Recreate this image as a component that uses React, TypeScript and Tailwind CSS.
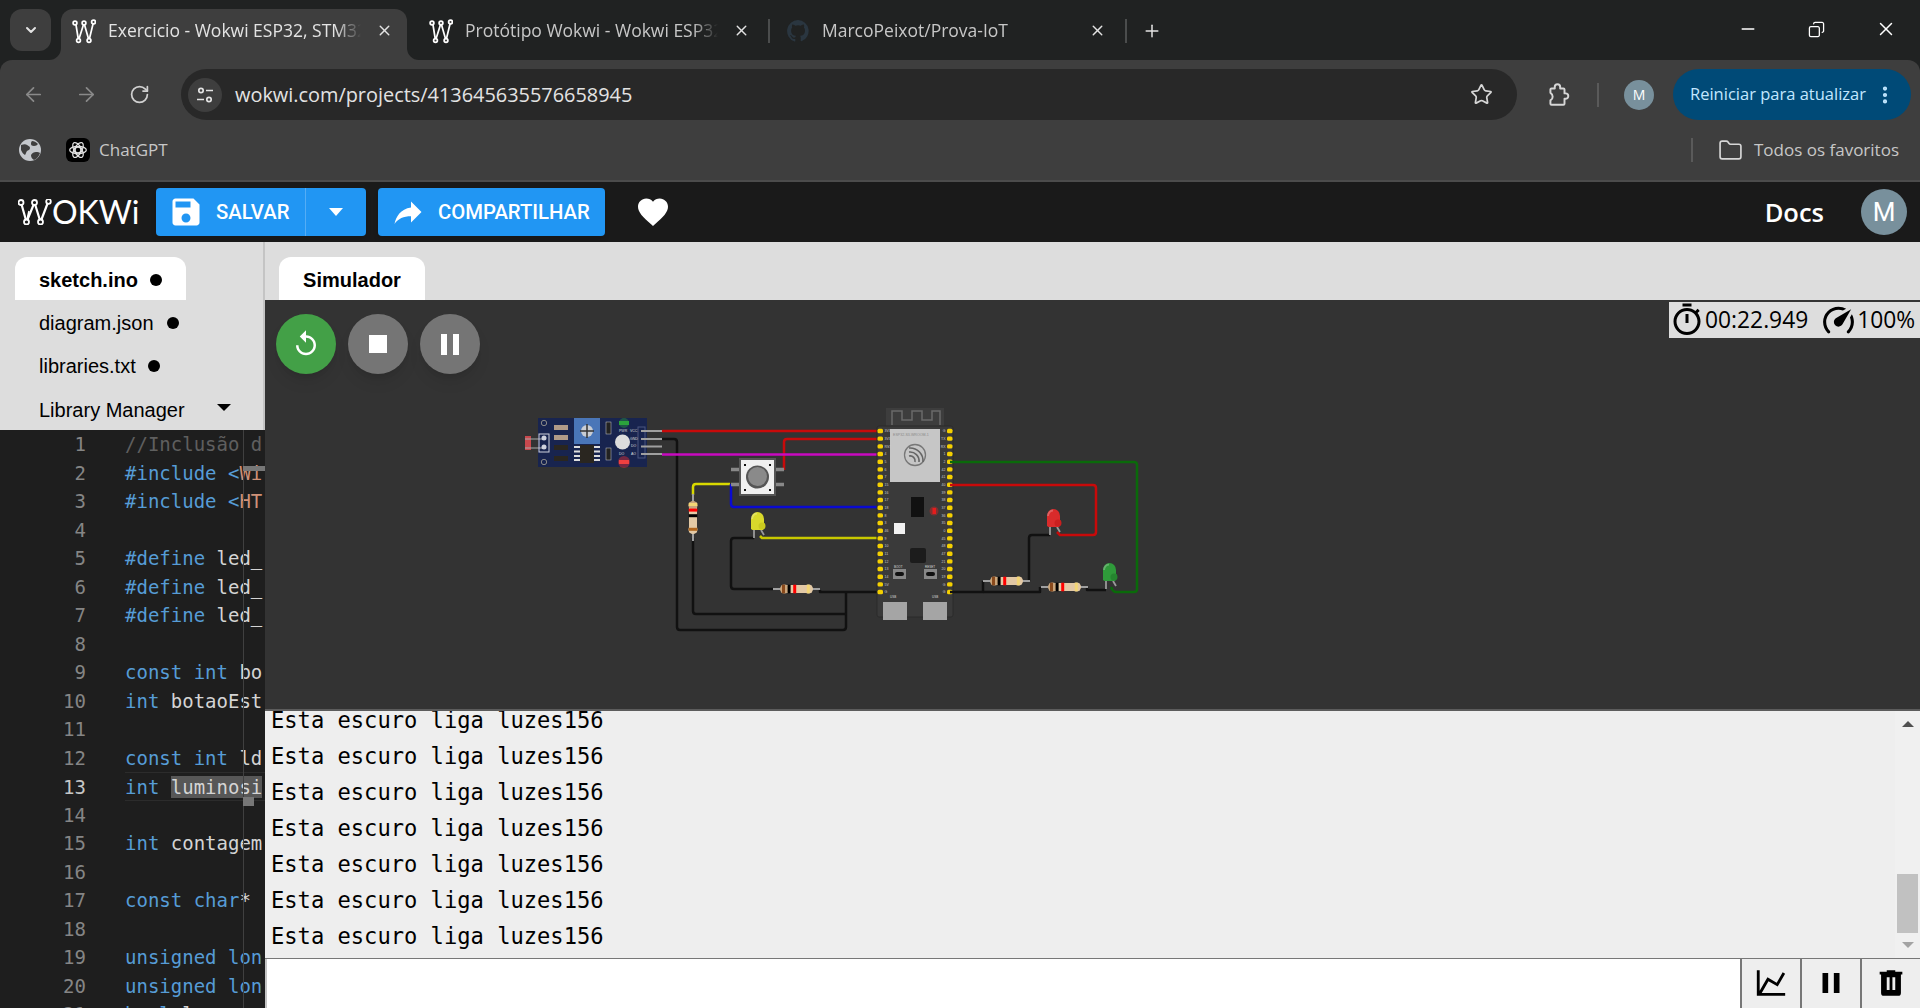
import React from "react";
import { ArrowLeft, ArrowRight, RotateCw, Star, Folder, X, Plus, Minus, ChevronDown, EllipsisVertical, Copy } from "lucide-react";

const ui = "font-['Open_Sans','Noto_Sans',sans-serif]";

function WMark({ className, big }: { className?: string; big?: boolean }) {
  if (big) {
    return (
      <svg viewBox="0 0 34 26" className={className} fill="none" stroke="#fff" strokeWidth="2.200">
        <path d="M3 3.500L8.500 23L16.500 3.500L22.500 23L30.500 2" strokeLinejoin="round" />
        <path d="M8.500 23L11 12" strokeWidth="1.600" />
        <circle cx="3" cy="3.500" r="2.500" fill="#1a1a1a" strokeWidth="1.800" />
        <circle cx="16.500" cy="3.500" r="2.500" fill="#1a1a1a" strokeWidth="1.800" />
        <circle cx="30.500" cy="2.500" r="2.300" fill="#1a1a1a" strokeWidth="1.800" />
        <circle cx="8.500" cy="23" r="2.500" fill="#1a1a1a" strokeWidth="1.800" />
        <circle cx="22.500" cy="23" r="2.500" fill="#1a1a1a" strokeWidth="1.800" />
      </svg>
    );
  }
  return (
    <svg viewBox="0 0 24 26" className={className} fill="none" stroke="#fff" strokeWidth="1.700">
      <path d="M3.700 5L6.500 22.500L12 5L17 22.500L21.500 4" strokeLinejoin="round" />
      <circle cx="3" cy="5" r="1.900" fill="#3e3e3e" />
      <circle cx="12" cy="5" r="1.900" fill="#3e3e3e" />
      <circle cx="21.500" cy="4" r="1.900" fill="#3e3e3e" />
      <circle cx="6.500" cy="22.500" r="1.900" fill="#3e3e3e" />
      <circle cx="17" cy="22.500" r="1.900" fill="#3e3e3e" />
    </svg>
  );
}

function BrowserTab({ title, active, github, width }: { title: string; active?: boolean; github?: boolean; width: string }) {
  return (
    <div className={`relative ${width} h-[51px] flex items-center shrink-0 pl-[11px] pr-[14px] pb-[8px] rounded-t-[12px] ${active ? "bg-[#3e3e3e]" : ""}`}>
      {active && (
        <>
          <svg viewBox="0 0 12 12" className="absolute -left-[12px] bottom-0 w-[12px] h-[12px]"><path d="M12 0V12H0A12 12 0 0 0 12 0z" fill="#3e3e3e" /></svg>
          <svg viewBox="0 0 12 12" className="absolute -right-[12px] bottom-0 w-[12px] h-[12px]"><path d="M0 0V12H12A12 12 0 0 1 0 0z" fill="#3e3e3e" /></svg>
        </>
      )}
      {github ? (
        <svg viewBox="0 0 24 24" className="w-[24px] h-[24px] shrink-0 mr-[12px]" fill="#2a3640">
          <path d="M12 1a11 11 0 0 0-3.500 21.400c.6.1.8-.2.8-.5v-2c-3.100.7-3.700-1.300-3.700-1.300-.5-1.300-1.200-1.600-1.200-1.600-1-.7.1-.7.1-.7 1.100.1 1.700 1.100 1.700 1.100 1 1.700 2.600 1.200 3.200.9.1-.7.4-1.200.7-1.500-2.400-.3-5-1.200-5-5.400 0-1.200.4-2.200 1.100-2.900-.1-.3-.5-1.400.1-2.900 0 0 .9-.3 3 1.100a10.400 10.400 0 0 1 5.500 0c2.100-1.400 3-1.100 3-1.100.6 1.500.2 2.600.1 2.900.7.7 1.100 1.700 1.100 2.900 0 4.200-2.600 5.100-5 5.400.4.3.7 1 .7 2v3c0 .3.2.6.8.5A11 11 0 0 0 12 1z" />
        </svg>
      ) : (
        <WMark className="w-[24px] h-[26px] shrink-0 mr-[12px]" />
      )}
      <span className={`flex-1 overflow-hidden whitespace-nowrap text-[17.500px] [mask-image:linear-gradient(to_right,#000_90%,transparent)] ${active ? "text-[#e3e3e3]" : "text-[#c7c7c7]"}`}>{title}</span>
      <X size={17} className="text-[#e3e3e3] shrink-0 ml-[15px]" />
    </div>
  );
}

function Sep() {
  return <div className="w-[2px] h-[24px] bg-[#4b4d4d] shrink-0" />;
}

function TabStrip() {
  return (
    <div className={`h-[60px] flex items-end shrink-0 ${ui}`}>
      <div className="w-[41px] h-[42px] ml-[10px] mb-[9px] rounded-[12px] bg-[#3e3e3e] flex items-center justify-center shrink-0">
        <ChevronDown size={16} strokeWidth={3} className="text-[#e3e3e3]" />
      </div>
      <div className="flex items-end ml-[10px]">
        <BrowserTab title="Exercicio - Wokwi ESP32, STM32" active width="w-[346px]" />
        <div className="w-[11px]" />
        <BrowserTab title="Protótipo Wokwi - Wokwi ESP32" width="w-[346px]" />
        <div className="h-[51px] flex items-center ml-[4px] mr-[5px] pb-[8px]"><Sep /></div>
        <BrowserTab title="MarcoPeixot/Prova-IoT" github width="w-[345px]" />
        <div className="h-[51px] flex items-center ml-[5px] pb-[8px]"><Sep /></div>
        <div className="h-[51px] flex items-center ml-[15px] pb-[8px]"><Plus size={20} strokeWidth={1.800} className="text-[#e3e3e3]" /></div>
      </div>
      <div className="ml-auto h-[60px] flex items-center pb-[2px]">
        <Minus size={20} strokeWidth={1.600} className="text-white mr-[50px]" />
        <Copy size={17} strokeWidth={1.800} className="text-white mr-[50px] -scale-x-100" />
        <X size={22} strokeWidth={1.600} className="text-white mr-[23px]" />
      </div>
    </div>
  );
}

function Toolbar() {
  return (
    <div className={`h-[60px] bg-[#3e3e3e] rounded-t-[12px] flex items-start pt-[9px] shrink-0 ${ui}`}>
      <div className="w-[181px] h-[51px] flex items-center shrink-0 text-[#8a8a8a]">
        <ArrowLeft size={23} strokeWidth={1.800} className="ml-[22px]" />
        <ArrowRight size={23} strokeWidth={1.800} className="ml-[30px]" />
        <RotateCw size={21} strokeWidth={2} className="ml-[31px] text-[#d0d0d0]" />
      </div>
      <div className="w-[1336px] h-[51px] rounded-full bg-[#282828] flex items-center shrink-0 pl-[7px]">
        <div className="w-[34px] h-[34px] rounded-full bg-[#3e3e3e] flex items-center justify-center">
          <svg viewBox="0 0 20 20" className="w-[20px] h-[20px]" fill="none" stroke="#e3e3e3" strokeWidth="1.700">
            <circle cx="6" cy="5.500" r="2.200" />
            <path d="M11 5.500h7M2 14.500h7" />
            <circle cx="14" cy="14.500" r="2.200" />
          </svg>
        </div>
        <span className="ml-[13px] text-[19.900px] text-[#e3e3e3]">wokwi.com/projects/413645635576658945</span>
        <Star size={23} strokeWidth={1.800} className="ml-auto mr-[24px] text-[#d6d6d6]" />
      </div>
      <div className="h-[51px] flex items-center flex-1">
        <svg viewBox="0 0 24 24" className="w-[26px] h-[26px] ml-[28px] shrink-0" fill="none" stroke="#d6d6d6" strokeWidth="1.800" strokeLinejoin="round">
          <path d="M6 6h3V4.500a2.500 2.500 0 0 1 5 0V6h3a1 1 0 0 1 1 1v3.500h1a2.500 2.500 0 0 1 0 5h-1V20a1 1 0 0 1-1 1H6a1 1 0 0 1-1-1v-3a4 4 0 0 0 0-7V7a1 1 0 0 1 1-1z" />
        </svg>
        <div className="w-[2px] h-[24px] bg-[#5a5a5a] ml-[26px]" />
        <div className="w-[30px] h-[30px] rounded-full bg-[#78909c] ml-[25px] flex items-center justify-center text-[14px] text-white">M</div>
        <div className="w-[238px] h-[51px] ml-[19px] rounded-full bg-[#004a77] flex items-center pl-[17px] text-[#c2e7ff]">
          <span className="text-[16.500px] whitespace-nowrap">Reiniciar para atualizar</span>
          <EllipsisVertical size={22} strokeWidth={2.600} className="ml-[8px] shrink-0" />
        </div>
      </div>
    </div>
  );
}

function Bookmarks() {
  return (
    <div className={`h-[62px] bg-[#3e3e3e] border-b-2 border-[#4c4c4c] flex items-center shrink-0 ${ui}`}>
      <svg viewBox="0 0 24 24" className="w-[24px] h-[24px] ml-[18px] shrink-0">
        <circle cx="12" cy="12" r="11" fill="#c4c7cc" />
        <path d="M3 7c3-1 5-1 6 0s3 1 3 3-2 2-3 3-1 3-2 4c-2-1-3-3-4-5 0-2 0-3 0-5zM14 3c2 0 4 1 6 3-1 1-2 2-4 2s-3-1-3-2 0-2 1-3zM13 17c1-2 3-3 5-3s3 0 4 1c-1 3-3 6-6 7-2-1-3-3-3-5z" fill="#3e3e3e" />
      </svg>
      <div className="w-[24px] h-[24px] rounded-[6px] bg-black ml-[24px] flex items-center justify-center shrink-0">
        <svg viewBox="0 0 24 24" className="w-[20px] h-[20px]" fill="none" stroke="#e3e3e3" strokeWidth="1.500">
          <circle cx="12" cy="12" r="3.500" />
          <ellipse cx="12" cy="12" rx="10" ry="4.500" />
          <ellipse cx="12" cy="12" rx="10" ry="4.500" transform="rotate(60 12 12)" />
          <ellipse cx="12" cy="12" rx="10" ry="4.500" transform="rotate(120 12 12)" />
        </svg>
      </div>
      <span className="ml-[9px] text-[17px] text-[#c7c7c7]">ChatGPT</span>
      <div className="ml-auto w-[2px] h-[24px] bg-[#5a5a5a]" />
      <Folder size={25} strokeWidth={1.600} className="ml-[25px] text-[#d6d6d6]" />
      <span className="ml-[11px] mr-[21px] text-[17px] text-[#c7c7c7]">Todos os favoritos</span>
    </div>
  );
}

function MI({ d, className }: { d: string; className?: string }) {
  return (
    <svg viewBox="0 0 24 24" className={className} fill="currentColor">
      <path d={d} />
    </svg>
  );
}

function AppHeader() {
  return (
    <div className="h-[60px] bg-[#1a1a1a] flex items-center shrink-0 font-['Roboto',sans-serif]">
      <div className="w-[156px] flex items-center pl-[18px] shrink-0">
        <WMark big className="w-[34px] h-[26px] shrink-0" />
        <span className="font-['Lato',sans-serif] font-normal text-[32px] leading-none text-white">OKWi</span>
      </div>
      <div className="w-[210px] h-[48px] rounded-[4px] bg-[#2196f3] flex items-center text-white shrink-0 shadow-md">
        <MI d="M17 3H5c-1.110 0-2 .9-2 2v14c0 1.100.89 2 2 2h14c1.100 0 2-.9 2-2V7l-4-4zm-5 16c-1.660 0-3-1.340-3-3s1.340-3 3-3 3 1.340 3 3-1.340 3-3 3zm3-10H5V5h10v4z" className="w-[36px] h-[36px] ml-[12px] shrink-0" />
        <span className="ml-[12px] pt-[1px] text-[20.300px] font-medium">SALVAR</span>
        <div className="ml-auto w-[1px] h-[48px] bg-[#54adf5]" />
        <div className="w-[60px] flex justify-center">
          <div className="w-0 h-0 border-l-[7px] border-r-[7px] border-t-[8px] border-l-transparent border-r-transparent border-t-white" />
        </div>
      </div>
      <div className="w-[227px] h-[48px] ml-[12px] rounded-[4px] bg-[#2196f3] flex items-center text-white shrink-0 shadow-md">
        <MI d="M14 9V5l7 7-7 7v-4.100c-5 0-8.500 1.600-11 5.100 1-5 4-10 11-11z" className="w-[36px] h-[36px] ml-[12px] shrink-0" />
        <span className="ml-[12px] pt-[1px] text-[20.300px] font-medium whitespace-nowrap">COMPARTILHAR</span>
      </div>
      <MI d="M12 21.350l-1.450-1.320C5.400 15.360 2 12.280 2 8.500 2 5.420 4.420 3 7.500 3c1.740 0 3.410.81 4.500 2.090C13.090 3.810 14.760 3 16.500 3 19.580 3 22 5.420 22 8.500c0 3.780-3.400 6.860-8.550 11.540L12 21.350z" className="w-[36px] h-[36px] ml-[30px] text-white shrink-0" />
      <span className={`ml-auto text-[25.500px] font-semibold text-white ${ui}`}>Docs</span>
      <div className="w-[46px] h-[46px] rounded-full bg-[#78909c] ml-[37px] mr-[13px] flex items-center justify-center text-[26px] text-white">M</div>
    </div>
  );
}

const K = ({ children }: { children: React.ReactNode }) => <span className="text-[#569cd6]">{children}</span>;
const S = ({ children }: { children: React.ReactNode }) => <span className="text-[#ce9178]">{children}</span>;

const code: React.ReactNode[] = [
  <span className="text-[#5f5f5f]">//Inclusão d</span>,
  <><K>#include</K> <K>&lt;</K><S>Wi</S></>,
  <><K>#include</K> <K>&lt;</K><S>HT</S></>,
  "",
  <><K>#define</K> led_</>,
  <><K>#define</K> led_</>,
  <><K>#define</K> led_</>,
  "",
  <><K>const</K> <K>int</K> bo</>,
  <><K>int</K> botaoEst</>,
  "",
  <><K>const</K> <K>int</K> ld</>,
  <><K>int</K> <span className="bg-[#575757]">luminosi</span></>,
  "",
  <><K>int</K> contagem</>,
  "",
  <><K>const</K> <K>char</K>*</>,
  "",
  <><K>unsigned</K> <K>lon</K></>,
  <><K>unsigned</K> <K>lon</K></>,
  <><K>bool</K> l</>,
];

function Sidebar() {
  const Dot = () => <span className="w-[12px] h-[12px] rounded-full bg-black inline-block shrink-0" />;
  return (
    <div className="w-[265px] flex flex-col shrink-0 overflow-hidden">
      <div className="h-[188px] bg-[#dddddd] border-r-2 border-[#c4c4c4] font-['Liberation_Sans',sans-serif] text-[20px] text-black pt-[15px] shrink-0">
        <div className="ml-[15px] w-[171px] h-[43px] bg-white rounded-t-[12px] flex items-center pl-[24px] pt-[2px] font-bold">
          sketch.ino<span className="w-[12px] h-[12px] rounded-full bg-black ml-[12px]" />
        </div>
        <div className="h-[43px] flex items-center pl-[39px] pt-[2px]">diagram.json<span className="ml-[13px] flex"><Dot /></span></div>
        <div className="h-[43px] flex items-center pl-[39px] pt-[2px]">libraries.txt<span className="ml-[12px] flex"><Dot /></span></div>
        <div className="h-[44px] flex items-center pl-[39px] pt-[4px]">
          Library Manager
          <div className="ml-[32px] -mt-[6px] w-0 h-0 border-l-[7px] border-r-[7px] border-t-[7px] border-l-transparent border-r-transparent border-t-black" />
        </div>
      </div>
      <div className="relative flex-1 bg-[#1e1e1e] overflow-hidden font-['DejaVu_Sans_Mono',monospace] text-[19px] text-[#d4d4d4]">
        <div className="absolute left-[243px] top-0 bottom-0 w-[1px] bg-[#404040]" />
        <div className="absolute left-[243px] top-[36px] w-[22px] h-[5px] bg-[#777]" />
        <div className="absolute left-[243px] top-[367px] w-[11px] h-[9px] bg-[#777]" />
        {code.map((c, i) => (
          <div key={i} className={`h-[28.500px] leading-[28.500px] flex whitespace-pre ${i === 12 ? "border-y border-[#2c2c2c] ml-[125px] -mr-[2px]" : ""}`}>
            <span className={`w-[86px] text-right shrink-0 ${i === 12 ? "text-[#c6c6c6] -ml-[125px]" : "text-[#858585]"}`}>{i + 1}</span>
            <span className="ml-[39px]">{c}</span>
          </div>
        ))}
      </div>
    </div>
  );
}

function Resistor({ x, y, bands, vertical }: { x: number; y: number; bands: string[]; vertical?: boolean }) {
  return (
    <g transform={`translate(${x} ${y})${vertical ? " rotate(90)" : ""}`}>
      <path d="M0 0H47" stroke="#a0a0a0" strokeWidth="2" />
      <rect x="8" y="-4" width="31" height="8" rx="2" fill="#e3c9a5" />
      <circle cx="11.500" cy="0" r="4.500" fill="#c9a57b" />
      <circle cx="35.500" cy="0" r="4.500" fill="#e3c9a5" />
      {bands.map((b, i) => (
        <rect key={i} x={9 + i * 5.600 + (i === 3 ? 8 : 0)} y="-4.300" width="3" height="8.600" fill={b} />
      ))}
    </g>
  );
}

function Led({ x, y, color, dark }: { x: number; y: number; color: string; dark: string }) {
  return (
    <g transform={`translate(${x} ${y})`}>
      <path d="M3 18v8M10 18l3 5" stroke="#9a9a9a" strokeWidth="1.800" fill="none" />
      <path d="M0 7a6.500 7 0 0 1 13 0v4l1 1v3l-2 3H1.500L0 17z" fill={color} />
      <path d="M1 7a5 5.500 0 0 1 5-5.500" stroke="#ffffff" strokeOpacity="0.25" strokeWidth="2" fill="none" />
      <circle cx="11" cy="14" r="3.500" fill={dark} />
    </g>
  );
}

const leftPins = ["3V3", "3V3", "RST", "4", "5", "6", "7", "15", "16", "17", "18", "8", "3", "46", "9", "10", "11", "12", "13", "14", "5V", "G"];
const rightPins = ["G", "TX", "RX", "1", "2", "42", "41", "40", "39", "38", "37", "36", "35", "0", "45", "48", "47", "21", "20", "19", "G", "G"];

function Circuit() {
  const pinY = Array.from({ length: 22 }, (_, i) => 431 + i * 7.670);
  const wire = { fill: "none", strokeWidth: 2.500, strokeLinejoin: "round" as const };
  const tiny = "font-['Liberation_Sans',sans-serif]";
  return (
    <svg viewBox="520 390 640 260" className="absolute left-[255px] top-[90px] w-[640px] h-[260px]">
      {/* sensor */}
      <rect x="538" y="418" width="109" height="49" fill="#18244f" />
      <rect x="525" y="436" width="6" height="14" fill="#c9484d" />
      <path d="M525 439h18M525 448h18" stroke="#aaa" />
      <rect x="539" y="434" width="10" height="18" fill="none" stroke="#cfd2de" />
      <circle cx="544" cy="438" r="2.500" fill="#cfd2de" />
      <circle cx="544" cy="447" r="2.500" fill="#cfd2de" />
      <circle cx="544" cy="423" r="2.700" fill="none" stroke="#888" />
      <circle cx="544" cy="462" r="2.700" fill="none" stroke="#888" />
      <rect x="554" y="425" width="14" height="5" fill="#b09a88" />
      <rect x="554" y="435" width="14" height="5" fill="#b09a88" />
      <rect x="554" y="445" width="14" height="5" fill="#2a2620" />
      <rect x="554" y="456" width="14" height="5" fill="#2a2620" />
      <rect x="574" y="418" width="26" height="26" fill="#4a76b8" />
      <circle cx="587" cy="431" r="6" fill="#c9cdd4" />
      <path d="M580 431h14M587 424v14" stroke="#333" strokeWidth="1.500" />
      <rect x="580" y="445" width="14" height="18" fill="#2a2620" />
      <path d="M574 447h6M574 451.500h6M574 456h6M574 460h6M594 447h6M594 451.500h6M594 456h6M594 460h6" stroke="#ddd" strokeWidth="2" />
      <rect x="606" y="422" width="5" height="12" fill="#222" stroke="#ccc" strokeWidth="0.500" />
      <rect x="606" y="448" width="5" height="12" fill="#222" stroke="#ccc" strokeWidth="0.500" />
      <circle cx="624" cy="423" r="5" fill="#2ba33c" fillOpacity="0.400" />
      <rect x="619" y="421" width="10" height="4" fill="#2ba33c" />
      <circle cx="622.500" cy="442" r="7.500" fill="#dcdcdc" />
      <circle cx="624" cy="462" r="6" fill="#ff3030" fillOpacity="0.400" />
      <rect x="619" y="460" width="10" height="4" fill="#f04040" />
      <rect x="638" y="427" width="7" height="31" fill="none" stroke="#4a5680" />
      <g className={tiny} fontSize="3.500" fill="#ddd">
        <text x="630" y="432">VCC</text>
        <text x="630" y="440">GND</text>
        <text x="631" y="447">DO</text>
        <text x="631" y="455">AO</text>
        <text x="619" y="432">PWR</text>
        <text x="619" y="455">DO</text>
      </g>
      <path d="M641 431h21M641 439h21M641 446.500h21M641 454h21" stroke="#a0a0a0" strokeWidth="2" />
      {/* wires */}
      <path d="M662 439H674q3 0 3 3V627q0 3 3 3H843q3 0 3-3V592" stroke="#111" {...wire} />
      <path d="M693 538V611q0 3 3 3H846" stroke="#111" {...wire} />
      <path d="M820 590v2H880" stroke="#111" {...wire} />
      <path d="M754 538H734q-3 0-3 3V586q0 3 3 3H773" stroke="#111" {...wire} />
      <path d="M662 431H880" stroke="#c80a0a" {...wire} />
      <path d="M784 470V442q0-3 3-3H880" stroke="#c80a0a" {...wire} />
      <path d="M662 454.500H880" stroke="#c80ac0" {...wire} />
      <path d="M730 484H696q-3 0-3 3v8" stroke="#d9d900" {...wire} />
      <path d="M731 484V504q0 3 3 3H880" stroke="#0a0ad0" {...wire} />
      <path d="M760 536l2 2H880" stroke="#c8c800" {...wire} />
      {/* button */}
      <path d="M731 469.500h9M731 484.500h9M775 469.500h9M775 484.500h9" stroke="#888" strokeWidth="3.500" />
      <rect x="740" y="459" width="35" height="36" fill="#f0f0f0" stroke="#555" strokeWidth="2" />
      <circle cx="757.500" cy="477" r="11.500" fill="#555" />
      <circle cx="757.500" cy="476.500" r="9.500" fill="#8a8a8a" />
      <path d="M744 464h2v2h-2zM769 464h2v2h-2zM744 489h2v2h-2zM769 489h2v2h-2z" fill="#111" />
      <Resistor x={693} y={494} bands={["#f3d675", "#ff0000", "#000000", "#b0651c"]} vertical />
      <Resistor x={773} y={589} bands={["#8a4a1c", "#000000", "#ff0000", "#f3d675"]} />
      <Led x={751} y={512} color="#d9d92b" dark="#c9c91f" />
      {/* esp32 */}
      <rect x="886" y="408" width="58" height="18" fill="#3d3d3d" />
      <path d="M892 425V411h10v9h10v-9h10v9h10v-9h8v14" fill="none" stroke="#6a6a6a" strokeWidth="1.500" />
      <rect x="877" y="426" width="76" height="191" rx="2" fill="#3a3a3a" stroke="#2b2b2b" />
      <rect x="890" y="429" width="50" height="53" fill="#c6c6c6" />
      <text x="893" y="436" fontSize="3.600" fill="#8a8a8a" className={tiny}>ESP32-S3-WROOM-1</text>
      <circle cx="915" cy="455" r="10.500" fill="none" stroke="#777" strokeWidth="1.300" />
      <path d="M909 448a13 13 0 0 1 14 14M909 452a9 9 0 0 1 10 10M909 456a5 5 0 0 1 6 6" fill="none" stroke="#666" strokeWidth="1.600" />
      <rect x="911" y="497" width="13" height="20" fill="#111" />
      <circle cx="934" cy="511" r="4.500" fill="#ff2020" fillOpacity="0.350" />
      <rect x="932.500" y="508" width="3.500" height="6" fill="#e51c1c" />
      <rect x="894" y="523" width="11" height="11" fill="#f2f2f2" />
      <rect x="910" y="548" width="16" height="15" rx="2" fill="#1c1c1c" />
      <rect x="893" y="569" width="13" height="10" fill="#888" />
      <rect x="895" y="572" width="9" height="4" rx="2" fill="#111" />
      <rect x="924" y="569" width="13" height="10" fill="#888" />
      <rect x="926" y="572" width="9" height="4" rx="2" fill="#111" />
      <g className={tiny} fontSize="3" fill="#ddd">
        <text x="894" y="568">BOOT</text>
        <text x="925" y="568">RESET</text>
        <text x="890" y="598">USB</text>
        <text x="932" y="598">USB</text>
      </g>
      <rect x="883" y="602" width="24" height="18" fill="#a5a5a5" />
      <rect x="923" y="602" width="24" height="18" fill="#a5a5a5" />
      {pinY.map((y, i) => (
        <g key={i}>
          <rect x="877.500" y={y - 2.200} width="5.500" height="4.400" rx="1.500" fill="#f5d000" />
          <rect x="947" y={y - 2.200} width="5.500" height="4.400" rx="1.500" fill="#f5d000" />
          <text x="884.500" y={y + 1.300} fontSize="3.500" fill="#ccc" className={tiny}>{leftPins[i]}</text>
          <text x="945.500" y={y + 1.300} fontSize="3.500" fill="#ccc" textAnchor="end" className={tiny}>{rightPins[i]}</text>
        </g>
      ))}
      {/* right wires */}
      <path d="M950 462H1134q3 0 3 3V589q0 3-3 3H1116q-3 0-5-5" stroke="#0a6a0a" {...wire} />
      <path d="M950 485H1093q3 0 3 3V532q0 3-3 3H1060l-3-3" stroke="#c80a0a" {...wire} />
      <path d="M950 592H983v-11M1029 581V538q0-3 3-3H1050" stroke="#111" {...wire} />
      <path d="M983 592H1040v-5M1087 587v3H1106" stroke="#111" {...wire} />
      <Resistor x={983} y={581} bands={["#8a4a1c", "#000000", "#ff0000", "#f3d675"]} />
      <Resistor x={1041} y={587} bands={["#8a4a1c", "#000000", "#ff0000", "#f3d675"]} />
      <Led x={1047} y={509} color="#d92b2b" dark="#c91f1f" />
      <Led x={1103} y={563} color="#2f9a3a" dark="#25852f" />
    </svg>
  );
}

function Sim() {
  return (
    <div className="relative h-[411px] bg-[#333333] border-b-2 border-[#5c5c5c] shrink-0">
      <div className="absolute left-[11px] top-[14px] flex gap-[12px]">
        <div className="w-[60px] h-[60px] rounded-full bg-[#43a047] flex items-center justify-center text-white shadow-lg">
          <MI d="M12 5V1L7 6l5 5V7c3.310 0 6 2.690 6 6s-2.690 6-6 6-6-2.690-6-6H4c0 4.420 3.580 8 8 8s8-3.580 8-8-3.580-8-8-8z" className="w-[30px] h-[30px]" />
        </div>
        <div className="w-[60px] h-[60px] rounded-full bg-[#757575] flex items-center justify-center shadow-lg">
          <div className="w-[18px] h-[18px] bg-white" />
        </div>
        <div className="w-[60px] h-[60px] rounded-full bg-[#757575] flex items-center justify-center gap-[6px] shadow-lg">
          <div className="w-[6px] h-[21px] bg-white" />
          <div className="w-[6px] h-[21px] bg-white" />
        </div>
      </div>
      <div className={`absolute right-0 top-[2px] w-[251px] h-[36px] bg-[#dddddd] flex items-center text-[22.800px] text-black ${ui}`}>
        <MI d="M15 1H9v2h6V1zm-4 13h2V8h-2v6zm8.030-6.610l1.420-1.420c-.43-.51-.9-.99-1.410-1.410l-1.420 1.420C16.070 4.740 14.120 4 12 4c-4.970 0-9 4.030-9 9s4.020 9 9 9 9-4.030 9-9c0-2.120-.74-4.070-1.970-5.610zM12 20c-3.870 0-7-3.130-7-7s3.130-7 7-7 7 3.130 7 7-3.130 7-7 7z" className="w-[36px] h-[36px] shrink-0" />
        <span>00:22.949</span>
        <MI d="M12,16A3,3 0 0,1 9,13C9,11.880 9.610,10.900 10.500,10.390L20.210,4.770L14.680,14.350C14.180,15.330 13.170,16 12,16M12,3C13.810,3 15.500,3.500 16.970,4.320L14.870,5.530C14,5.190 13,5 12,5A8,8 0 0,0 4,13C4,15.210 4.890,17.210 6.340,18.650H6.350C6.740,19.040 6.740,19.670 6.350,20.060C5.960,20.450 5.320,20.450 4.930,20.070V20.070C3.120,18.260 2,15.760 2,13A10,10 0 0,1 12,3M22,13C22,15.760 20.880,18.260 19.070,20.070V20.070C18.680,20.450 18.050,20.450 17.660,20.060C17.270,19.670 17.270,19.040 17.660,18.650V18.650C19.110,17.200 20,15.210 20,13C20,12 19.810,11 19.460,10.100L20.670,8C21.500,9.500 22,11.180 22,13Z" className="w-[37px] h-[37px] ml-[12px] shrink-0" />
        <span className="whitespace-nowrap">100%</span>
      </div>
      <Circuit />
    </div>
  );
}

function Serial() {
  return (
    <div className="relative h-[248px] bg-[#eeeeee] border-b border-[#777] overflow-hidden shrink-0 font-['DejaVu_Sans_Mono',monospace] text-[22.100px] text-black">
      <div className="-mt-[9px] pl-[6px]">
        {Array.from({ length: 7 }, (_, i) => (
          <div key={i} className="h-[36px] leading-[36px] whitespace-pre">Esta escuro liga luzes156</div>
        ))}
      </div>
      <div className="absolute right-0 top-0 bottom-0 w-[25px] bg-[#f0f0f0] flex flex-col items-center">
        <div className="mt-[10px] w-0 h-0 border-l-[6px] border-r-[6px] border-b-[6px] border-l-transparent border-r-transparent border-b-[#505050]" />
        <div className="mt-[147px] w-[21px] h-[59px] bg-[#c1c1c1]" />
        <div className="mt-[9px] w-0 h-0 border-l-[6px] border-r-[6px] border-t-[6px] border-l-transparent border-r-transparent border-t-[#a3a3a3]" />
      </div>
    </div>
  );
}

function SerialInput() {
  const B = ({ children }: { children: React.ReactNode }) => (
    <div className="w-[60px] h-full bg-[#eeeeee] border-l-2 border-[#777] flex items-start pt-[7px] justify-center">{children}</div>
  );
  return (
    <div className="flex-1 bg-white border-l-2 border-[#c4c4c4] flex justify-end">
      <B><MI d="M16,11.780L20.240,4.450L21.970,5.450L16.740,14.500L10.230,10.750L5.460,19H22V21H2V3H4V17.540L9.500,8L16,11.780Z" className="w-[34px] h-[34px] text-black" /></B>
      <B><MI d="M6 5h4v14H6zM14 5h4v14h-4z" className="w-[34px] h-[34px] text-black" /></B>
      <B><MI d="M9,3V4H4V6H5V19A2,2 0 0,0 7,21H17A2,2 0 0,0 19,19V6H20V4H15V3H9M9,8H11V17H9V8M13,8H15V17H13V8Z" className="w-[34px] h-[34px] text-black" /></B>
    </div>
  );
}

export default function App() {
  return (
    <div className="w-[1920px] h-[1008px] flex flex-col overflow-hidden bg-white">
      <div className="bg-[#202222] shrink-0">
        <TabStrip />
        <Toolbar />
      </div>
      <Bookmarks />
      <AppHeader />
      <div className="flex-1 flex min-h-0">
        <Sidebar />
        <div className="flex-1 flex flex-col min-w-0">
          <div className="h-[58px] bg-[#dddddd] flex items-end pl-[14px] shrink-0">
            <div className="w-[146px] h-[43px] pt-[2px] bg-white rounded-t-[12px] flex items-center justify-center font-['Liberation_Sans',sans-serif] font-bold text-[20px] text-black">Simulador</div>
          </div>
          <Sim />
          <Serial />
          <SerialInput />
        </div>
      </div>
    </div>
  );
}
